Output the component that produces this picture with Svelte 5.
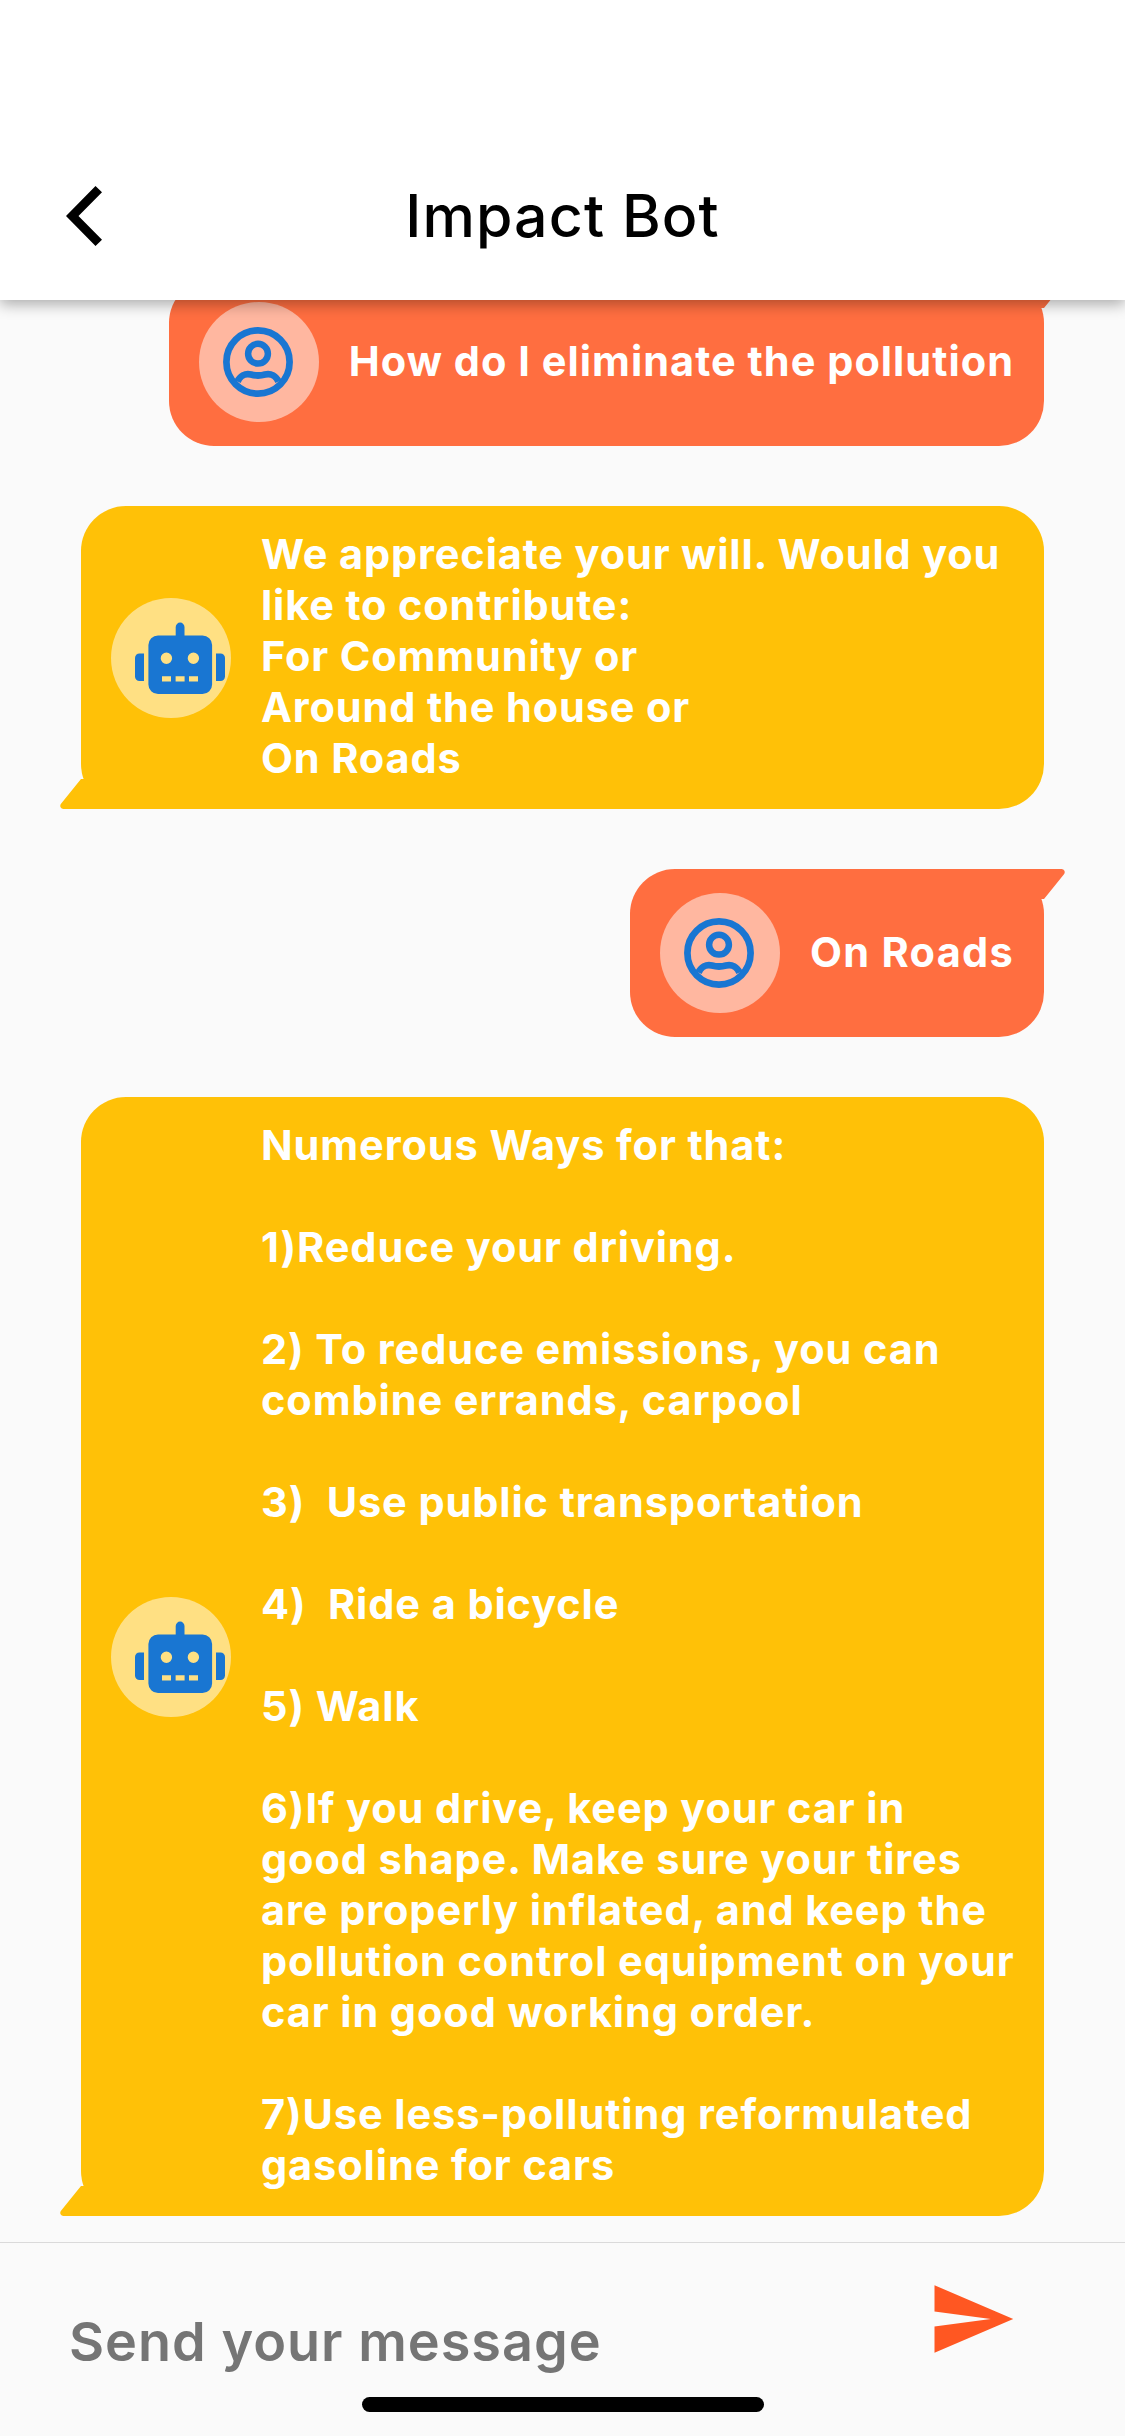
<script>
  // `tracking` is the letter spacing of the message, in pixels
  const messages = [
    { from: 'user', tracking: 1.01, text: 'How do I eliminate the pollution' },
    {
      from: 'bot',
      tracking: 0.85,
      text: 'We appreciate your will. Would you\nlike to contribute:\nFor Community or\nAround the house or\nOn Roads'
    },
    { from: 'user', tracking: 1.28, text: 'On Roads' },
    {
      from: 'bot',
      tracking: 0.9,
      text: 'Numerous Ways for that:\n\n1)Reduce your driving.\n\n2) To reduce emissions, you can\ncombine errands, carpool\n\n3)  Use public transportation\n\n4)  Ride a bicycle\n\n5) Walk\n\n6)If you drive, keep your car in\ngood shape. Make sure your tires\nare properly inflated, and keep the\npollution control equipment on your\ncar in good working order.\n\n7)Use less-polluting reformulated\ngasoline for cars'
    }
  ];
</script>

<div class="screen">
  <header>
    <svg class="back" viewBox="0 0 36 60" aria-label="Back">
      <path d="M29.5 0 36 6.3 12.5 30 36 53.7 29.5 60 0 30z" />
    </svg>
    <h1>Impact Bot</h1>
  </header>

  <main>
    {#each messages as m}
      <div class="bubble {m.from}">
        <svg class="nip" viewBox="0 0 66 30">
          <path d="M21 0 1 24.8A3.2 3.2 0 0 0 3.4 30H66V0Z" />
        </svg>
        <div class="avatar">
          {#if m.from === 'bot'}
            <svg viewBox="0 0 120 120" fill="#1976d2">
              <path d="M64.7 39V29a4.4 4.4 0 0 1 8.8 0V39z" />
              <path d="M33 55.500v27.500h-4.500a4.500 4.500 0 0 1-4.500-4.500V60a4.500 4.500 0 0 1 4.500-4.500z" />
              <path d="M105 55.500v27.500h4.500a4.500 4.500 0 0 0 4.500-4.500V60a4.500 4.500 0 0 0-4.500-4.500z" />
              <path
                fill-rule="evenodd"
                d="M47 37.500h44.500a9.600 9.600 0 0 1 9.600 9.600v39.400a9.600 9.600 0 0 1-9.600 9.600H47a9.600 9.600 0 0 1-9.600-9.600V47.100a9.600 9.600 0 0 1 9.600-9.600zM49.700 60.300a5.700 5.700 0 1 0 11.400 0a5.700 5.700 0 1 0-11.400 0zM76.700 60.300a5.700 5.700 0 1 0 11.400 0a5.700 5.700 0 1 0-11.400 0zM51 78.200h9v5.200h-9zM64.600 78.200h9v5.200h-9zM78 78.200h9v5.200h-9z"
              />
            </svg>
          {:else}
            <svg viewBox="0 0 120 120" fill="none" stroke="#1976d2">
              <circle cx="59" cy="60" r="31.600" stroke-width="6.700" />
              <circle cx="59" cy="51.700" r="9.900" stroke-width="6.500" />
              <path d="M38.500 79.500C41 74 46 71 52 72.500Q59 74.500 66 72.500C72 71 77 74 79.500 79.500" stroke-width="6.800" />
            </svg>
          {/if}
        </div>
        <p style:letter-spacing="{m.tracking}px">{m.text}</p>
      </div>
    {/each}
  </main>

  <footer>
    <span class="placeholder">Send your message</span>
    <svg class="send" viewBox="0 0 24 24" aria-label="Send">
      <path d="M2 21 23 12 2 3v7l15 2-15 2z" />
    </svg>
    <div class="home"></div>
  </footer>
</div>

<style>
  .screen {
    width: 1125px;
    height: 2436px;
    display: flex;
    flex-direction: column;
    overflow: hidden;
    background: #fafafa;
    font-family: Inter, 'Liberation Sans', sans-serif;
  }
  header {
    position: relative;
    z-index: 1;
    flex: none;
    box-sizing: border-box;
    height: 300px;
    padding: 132px 66px 0;
    display: grid;
    grid-template-columns: 36px 1fr 36px;
    align-items: center;
    background: #fff;
    box-shadow: 0 4px 14px rgba(0, 0, 0, 0.33);
  }
  .back {
    width: 36px;
    height: 60px;
  }
  h1 {
    margin: 0;
    text-align: center;
    font-size: 59px;
    font-weight: 450;
    letter-spacing: 1.13px;
    line-height: 72px;
  }
  main {
    flex: none;
    box-sizing: border-box;
    height: 1942px;
    padding: 0 81px 26px;
    display: flex;
    flex-direction: column;
    justify-content: flex-end;
    align-items: flex-end;
    gap: 60px;
  }
  .bubble {
    position: relative;
    flex: none;
    box-sizing: border-box;
    padding: 24px 30px;
    display: flex;
    align-items: center;
    gap: 30px;
    border-radius: 45px;
    background: var(--tone);
  }
  .user {
    --tone: #ff6e40;
  }
  .bot {
    --tone: #ffc107;
    width: 963px;
  }
  .nip {
    position: absolute;
    width: 66px;
    height: 30px;
    fill: var(--tone);
  }
  .bot .nip {
    left: -21px;
    bottom: 0;
  }
  .user .nip {
    right: -21px;
    top: 0;
    transform: rotate(180deg);
  }
  .avatar {
    flex: none;
    width: 120px;
    height: 120px;
    border-radius: 50%;
    background: rgba(255, 255, 255, 0.5);
  }
  .avatar svg {
    display: block;
    width: 120px;
    height: 120px;
  }
  p {
    margin: 0;
    white-space: pre;
    color: #fff;
    font-size: 41.5px;
    font-weight: 700;
    line-height: 51px;
    transform: translateY(-1px);
  }
  footer {
    flex: 1;
    box-sizing: border-box;
    border-top: 1px solid #dadada;
    padding: 31px 108px 0 69px;
    display: grid;
    grid-template-columns: 1fr 90px;
    grid-template-rows: 123px 15px;
    align-items: start;
  }
  .placeholder {
    padding-top: 35px;
    color: #757575;
    font-size: 54px;
    font-weight: 600;
    letter-spacing: 1px;
    line-height: 66px;
    white-space: nowrap;
  }
  .send {
    width: 90px;
    height: 90px;
    fill: #ff5722;
  }
  .home {
    grid-column: 1 / -1;
    width: 402px;
    height: 15px;
    margin-left: 293px;
    border-radius: 8px;
    background: #000;
  }
</style>
